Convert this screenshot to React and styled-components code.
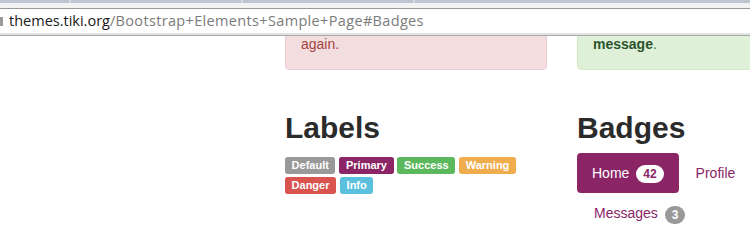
import React from "react";
import styled, { createGlobalStyle } from "styled-components";

const Global = createGlobalStyle`
  html, body { margin: 0; padding: 0; background: #fff; overflow: hidden; }
  body { font-family: "Liberation Sans", Arial, sans-serif; font-size: 14px; line-height: 20px; color: #333; }
  * { box-sizing: border-box; }
`;

const Chrome = styled.div`
  display: flex;
  flex-direction: column;
  height: 36px;
`;

const TabStrip = styled.div`
  display: flex;
  height: 3px;
  background: #bcc6d1;
  padding-left: 69px;
`;

const TabEdge = styled.span`
  width: 172px;
  border-left: 2px solid #d3dae2;
`;

const Shelf = styled.div`
  height: 6px;
  background: #f2f2f2;
  border-bottom: 1px solid #9a9a9a;
`;

const AddressBar = styled.div`
  display: flex;
  align-items: center;
  height: 24px;
  background: #fff;
  font-family: "Open Sans", "Noto Sans", sans-serif;
  font-size: 14.5px;
  line-height: 24px;
  white-space: nowrap;
`;

const IconStub = styled.span`
  width: 3px;
  height: 9px;
  margin-right: 6px;
  margin-top: 1px;
  background: #9a9a9a;
`;

const Host = styled.span`
  color: #1a1a1a;
`;

const Path = styled.span`
  color: #7b7b7b;
  letter-spacing: 0.34px;
`;

const ChromeBottom = styled.div`
  height: 3px;
  background: #e2e2e2;
  border-bottom: 1px solid #a9a9a9;
`;

const Page = styled.div`
  height: 207px;
  overflow: hidden;
  padding-left: 285px;
`;

const Grid = styled.div`
  display: grid;
  grid-template-columns: 262px 262px;
  column-gap: 30px;
  margin-top: -18px;
`;

const Alert = styled.div`
  padding: 15px;
  border: 1px solid ${(p) => (p.$kind === "danger" ? "#ebccd1" : "#d6e9c6")};
  background: ${(p) => (p.$kind === "danger" ? "#f2dede" : "#dff0d8")};
  color: ${(p) => (p.$kind === "danger" ? "#a94442" : "#3c763d")};
  border-radius: 4px;
  margin-bottom: 20px;
`;

const AlertLink = styled.b`
  color: #2b542c;
  font-weight: 700;
`;

const Heading = styled.h2`
  margin: 21px 0 10px;
  font-size: 30px;
  line-height: 1.1;
  font-weight: 700;
  color: #2b2b2b;
`;

const LabelRow = styled.div`
  line-height: 20px;
`;

const labelColors = {
  default: "#999999",
  primary: "#8b2566",
  success: "#5cb85c",
  warning: "#f0ad4e",
  danger: "#d9534f",
  info: "#5bc0de",
};

const Label = styled.span`
  display: inline;
  padding: 0.2em 0.6em 0.3em;
  font-size: 11px;
  font-weight: 700;
  line-height: 1;
  color: #fff;
  white-space: nowrap;
  border-radius: 0.25em;
  background: ${(p) => labelColors[p.$kind]};
`;

const Pills = styled.ul`
  display: flex;
  flex-wrap: wrap;
  list-style: none;
  margin: 0;
  padding: 0;
  margin-top: -1px;
`;

const Pill = styled.li`
  margin-left: 2px;
  &:first-child { margin-left: 0; }
`;

const PillLink = styled.a`
  display: block;
  padding: 10px 15px;
  line-height: 20px;
  border-radius: 4px;
  text-decoration: none;
  color: ${(p) => (p.$active ? "#fff" : "#8b2566")};
  background: ${(p) => (p.$active ? "#8b2566" : "transparent")};
`;

const Badge = styled.span`
  display: inline-block;
  min-width: 10px;
  margin-left: 3px;
  padding: 3px 7px;
  font-size: 12px;
  font-weight: 700;
  line-height: 1;
  text-align: center;
  white-space: nowrap;
  vertical-align: middle;
  border-radius: 10px;
  color: ${(p) => (p.$inverse ? "#8b2566" : "#fff")};
  background: ${(p) => (p.$inverse ? "#fff" : "#999")};
`;

export default function App() {
  return (
    <>
      <Global />
      <Chrome>
        <TabStrip>
          <TabEdge />
          <TabEdge />
          <TabEdge />
        </TabStrip>
        <Shelf />
        <AddressBar>
          <IconStub />
          <Host>themes.tiki.org</Host>
          <Path>/Bootstrap+Elements+Sample+Page#Badges</Path>
        </AddressBar>
        <ChromeBottom />
      </Chrome>
      <Page>
        <Grid>
          <Alert $kind="danger">again.</Alert>
          <Alert $kind="success">
            <AlertLink>message</AlertLink>.
          </Alert>
          <section>
            <Heading>Labels</Heading>
            <LabelRow>
              <Label $kind="default">Default</Label>{" "}
              <Label $kind="primary">Primary</Label>{" "}
              <Label $kind="success">Success</Label>{" "}
              <Label $kind="warning">Warning</Label>{" "}
              <Label $kind="danger">Danger</Label>{" "}
              <Label $kind="info">Info</Label>
            </LabelRow>
          </section>
          <section>
            <Heading>Badges</Heading>
            <Pills>
              <Pill>
                <PillLink $active href="#">
                  Home <Badge $inverse>42</Badge>
                </PillLink>
              </Pill>
              <Pill>
                <PillLink href="#">Profile</PillLink>
              </Pill>
              <Pill>
                <PillLink href="#">
                  Messages <Badge>3</Badge>
                </PillLink>
              </Pill>
            </Pills>
          </section>
        </Grid>
      </Page>
    </>
  );
}
